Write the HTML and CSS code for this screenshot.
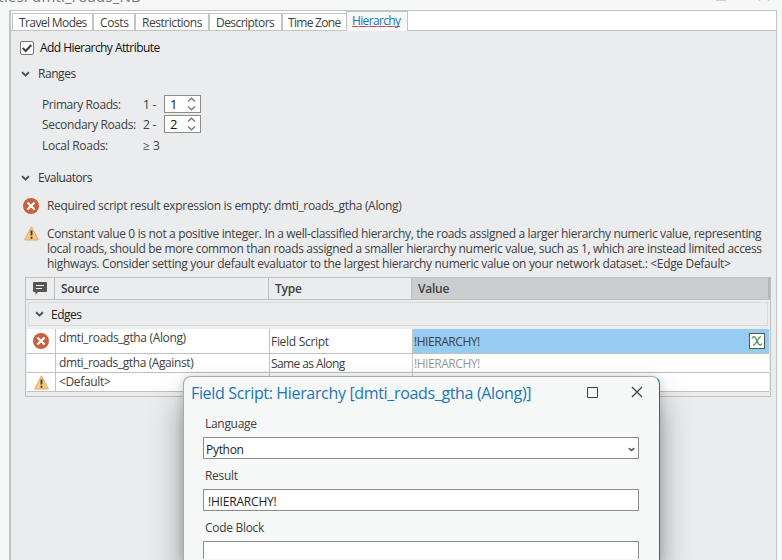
FILE: index.html
```html
<!DOCTYPE html>
<html lang="en">
<head>
<meta charset="utf-8">
<title>Network dataset properties</title>
<link rel="stylesheet" href="styles.css">
</head>
<body>
<svg width="0" height="0" class="defs">
  <symbol id="chevron" viewBox="0 0 9 6"><path d="M1 1.2 4.5 4.4 8 1.2" fill="none" stroke="#505050" stroke-width="1.9"/></symbol>
  <symbol id="error" viewBox="0 0 16 16"><circle cx="8" cy="8" r="8" fill="#c8613f"/><path d="M4.4 4.4l7.2 7.2M11.6 4.4l-7.2 7.2" stroke="#fff" stroke-width="2.1"/></symbol>
  <symbol id="warning" viewBox="0 0 15 15"><path d="M7.5.8 14.4 14H.6Z" fill="#f6c98c" stroke="#eda95b" stroke-width="1" stroke-linejoin="round"/><path d="M7.5 4.5v5M7.5 10.7v2" stroke="#404040" stroke-width="1.9"/></symbol>
</svg>
<header class="titlebar">
  <span class="window-title">rties: dmti_roads_NB</span>
  <span class="window-buttons"><svg width="60" height="10" viewBox="0 0 60 10"><path d="M1 9.5h10M44.500 8v2M53.500 8v2" stroke="#ccd0d0" stroke-width="1.5"/></svg></span>
</header>
<main class="panel">
  <nav class="tabs">
    <span class="tab t-travel">Travel Modes</span>
    <span class="tab t-costs">Costs</span>
    <span class="tab t-restrict">Restrictions</span>
    <span class="tab t-desc">Descriptors</span>
    <span class="tab t-zone">Time Zone</span>
    <span class="tab t-hier active"><span class="link">Hierarchy</span></span>
  </nav>
  <section class="content">
    <label class="check-row">
      <span class="checkbox"><svg width="12" height="12" viewBox="0 0 12 12"><path d="M1.700 6 4.700 9 10.300 3" fill="none" stroke="#404040" stroke-width="2"/></svg></span>
      <span class="check-label">Add Hierarchy Attribute</span>
    </label>
    <h2 class="group ranges-title"><svg width="9" height="6"><use href="#chevron"/></svg><span>Ranges</span></h2>
    <div class="ranges">
      <span class="narrow">Primary Roads:</span><span>1 -</span>
      <span class="spinner">1<svg width="9" height="14" viewBox="0 0 9 14"><path d="M1 4.500 4.500 1.200 8 4.500M1 9.500 4.500 12.800 8 9.500" fill="none" stroke="#777" stroke-width="1.300"/></svg></span>
      <span class="tight">Secondary Roads:</span><span>2 -</span>
      <span class="spinner">2<svg width="9" height="14" viewBox="0 0 9 14"><path d="M1 4.500 4.500 1.200 8 4.500M1 9.500 4.500 12.800 8 9.500" fill="none" stroke="#777" stroke-width="1.300"/></svg></span>
      <span>Local Roads:</span><span class="wide">≥ 3</span>
    </div>
    <h2 class="group eval-title"><svg width="9" height="6"><use href="#chevron"/></svg><span>Evaluators</span></h2>
    <div class="message error-message"><svg width="16" height="16"><use href="#error"/></svg><p class="m0">Required script result expression is empty: dmti_roads_gtha (Along)</p></div>
    <div class="message warning-message"><svg width="15" height="15"><use href="#warning"/></svg><p><span class="m1">Constant value 0 is not a positive integer. In a well-classified hierarchy, the roads assigned a larger hierarchy numeric value, representing</span><br><span class="m2">local roads, should be more common than roads assigned a smaller hierarchy numeric value, such as 1, which are instead limited access</span><br><span class="m3">highways. Consider setting your default evaluator to the largest hierarchy numeric value on your network dataset.: &lt;Edge Default&gt;</span></p></div>
    <div class="table">
      <div class="head">
        <span class="cell icon-cell"><svg width="14" height="13" viewBox="0 0 14 13"><path d="M1 0h12q1 0 1 1v8q0 1-1 1H5L2.500 12.800V10H1Q0 10 0 9V1Q0 0 1 0Z" fill="#555"/><path d="M3 3.500h8M3 6.500h6" stroke="#eee" stroke-width="1.200"/></svg></span>
        <span class="cell">Source</span><span class="cell">Type</span><span class="cell sorted">Value</span>
      </div>
      <div class="edges"><svg width="9" height="6"><use href="#chevron"/></svg><span>Edges</span></div>
      <div class="row r1">
        <span class="cell icon-cell"><svg width="16" height="16"><use href="#error"/></svg></span>
        <span class="cell src">dmti_roads_gtha (Along)</span><span class="cell">Field Script</span>
        <span class="cell selected"><span class="caps">!HIERARCHY!</span><span class="expr"><svg width="12" height="12" viewBox="0 0 12 12"><path d="M1 3.500Q2 1 4 2.200L8 9.500Q9.500 11 11 8.500M9.800 1.500Q8 2 6 6T2 10.300" fill="none" stroke="#5a9a5a" stroke-width="1.400"/></svg></span></span>
      </div>
      <div class="row r2">
        <span class="cell"></span><span class="cell src against">dmti_roads_gtha (Against)</span><span class="cell same">Same as Along</span><span class="cell muted caps">!HIERARCHY!</span>
      </div>
      <div class="row r3">
        <span class="cell icon-cell"><svg width="15" height="15"><use href="#warning"/></svg></span><span class="cell src">&lt;Default&gt;</span><span class="cell"></span><span class="cell"></span>
      </div>
    </div>
  </section>
</main>
<div class="dialog" role="dialog">
  <div class="dialog-head">
    <h1>Field Script: Hierarchy [dmti_roads_gtha (Along)]</h1>
    <svg class="maximize" width="11" height="11" viewBox="0 0 11 11"><path d="M.5.5h10v10H.5Z" fill="none" stroke="#404040"/></svg>
    <svg width="12" height="12" viewBox="0 0 12 12"><path d="M1 1l10 10M11 1 1 11" stroke="#404040" stroke-width="1.200"/></svg>
  </div>
  <div class="form">
    <span class="label">Language</span>
    <div class="field select"><span>Python</span><svg width="7" height="5" viewBox="0 0 9 6"><use href="#chevron"/></svg></div>
    <span class="label">Result</span>
    <div class="field result"><span>!HIERARCHY!</span></div>
    <span class="label">Code Block</span>
    <div class="field code"></div>
  </div>
</div>
</body>
</html>
```
FILE: styles.css
```css
* { box-sizing: border-box; }
body {
  position: relative;
  width: 782px;
  height: 560px;
  margin: 0;
  overflow: hidden;
  background: #f6f8f7;
  color: #404040;
  font: 12px/15px "Open Sans", "Noto Sans", sans-serif;
  letter-spacing: -0.3px;
  white-space: nowrap;
}
svg { display: block; flex: none; }
.defs { position: absolute; }
h1, h2, p { margin: 0; font: inherit; }

.titlebar {
  display: flex;
  justify-content: space-between;
  align-items: flex-start;
  height: 10px;
  overflow: hidden;
}
.window-title { margin: -13px 0 0 -8px; font-size: 15px; line-height: 18px; color: #777; letter-spacing: 0.2px; }
.window-buttons { margin: -9px 0 0; padding-right: 7px; }

.panel {
  width: 768px;
  height: 550px;
  margin-left: 9px;
  border: solid #c2c3c5;
  border-width: 1px 1px 0 2px;
  background: #ebecee;
}
.tabs { display: flex; height: 20px; padding: 2px 0 0 1px; background: #fff; border-bottom: 1px solid #bfc0c5; }
.tab {
  height: 18px;
  border: 1px solid #c2c3c5;
  padding-left: 6px;
  line-height: 17px;
  background: #fff;
}
.t-travel { width: 81px; letter-spacing: -0.6px; }
.t-costs { width: 42px; letter-spacing: -0.4px; }
.t-restrict { width: 74px; letter-spacing: -0.45px; }
.t-desc { width: 73px; letter-spacing: -0.55px; }
.t-zone { width: 64px; padding-left: 5px; border-right: 0; letter-spacing: -0.7px; }
.t-hier { width: 62px; padding-left: 5px; letter-spacing: -0.65px; }
.tab.active { height: 20px; margin-top: -2px; background: #f6f8f7; border-bottom: 0; color: #1b75bc; line-height: 17px; }
.link {
  display: inline-block;
  height: 15px;
  line-height: 17px;
  border-bottom: 1px solid #6f95c6;
  border-image: repeating-linear-gradient(90deg, #e8383d 0 6px, #6f95c6 6px 9px) 1;
}

.content { padding: 9px 0 0 9px; }
.check-row { display: flex; align-items: center; gap: 6px; height: 15px; color: #111; }
.check-label { margin-top: -1px; letter-spacing: -0.56px; }
.checkbox { width: 14px; height: 14px; border: 1px solid #777; border-radius: 2px; background: #fff; }
.group { display: flex; align-items: center; gap: 8px; height: 15px; padding-left: 1px; color: #333; letter-spacing: -0.45px; }
.ranges-title { margin-top: 11px; }
.ranges {
  display: grid;
  grid-template-columns: 101px 21px 37px;
  grid-template-rows: 20px 20px 23px;
  align-items: center;
  margin: 13px 0 0 22px;
}
.narrow { letter-spacing: -0.42px; }
.tight { letter-spacing: -0.33px; }
.wide { letter-spacing: 0; }
.spinner { display: flex; align-items: center; justify-content: space-between; width: 37px; height: 18px; padding: 0 4px 0 5px; border: 1px solid #8c8c8c; background: #fff; color: #111; font-size: 13px; }
.eval-title { margin-top: 13px; }
.message { display: flex; gap: 8px; }
.error-message { margin: 13px 0 0 3px; }
.warning-message { margin: 12px 0 0 4px; }
.m0 { letter-spacing: -0.32px; }
.m1, .m2 { letter-spacing: -0.34px; }
.m3 { letter-spacing: -0.33px; }

.table { width: 746px; height: 120px; margin: 6px 0 0 5px; border: 1px solid #bfc0c2; }
.head { display: grid; grid-template-columns: 29px 214px 143px 1fr; height: 22px; border-bottom: 1px solid #bfc0c2; font-weight: 600; letter-spacing: -0.25px; }
.head .cell { display: flex; align-items: center; padding-left: 6px; border-right: 1px solid #bfc0c2; }
.head .sorted { background: #cbccd0; border-right: 2px solid #b4b5ba; }
.edges { display: flex; align-items: center; gap: 7px; height: 24px; margin: 2px 2px 3px; padding-left: 6px; border: 1px solid #d9dadc; color: #222; letter-spacing: -0.5px; }
.row { display: grid; grid-template-columns: 29px 214px 143px 1fr; margin: 0 1px; background: #fff; border-bottom: 1px solid #bfc0c2; }
.row .cell { display: flex; align-items: center; padding-left: 1px; border-right: 1px solid #c5c5c5; }
.row .cell:last-child { border-right: 0; }
.row .src { align-items: flex-start; padding: 1px 0 0 3px; letter-spacing: -0.35px; }
.row .against { letter-spacing: -0.4px; }
.row .same { letter-spacing: -0.6px; }
.caps { letter-spacing: -0.45px; }
.r1 { height: 25px; }
.r2 { height: 19px; }
.r3 { height: 19px; }
.head .icon-cell, .row .icon-cell { justify-content: center; padding: 0; }
.row .selected { justify-content: space-between; padding-right: 4px; background: #96ccef; }
.expr { width: 16px; height: 16px; padding: 1px; border: 1px solid #555; background: #fff; }
.row .muted { color: #999; }

.dialog {
  position: absolute;
  left: 183px;
  top: 376px;
  width: 477px;
  height: 184px;
  border-top: 1px solid #aaa;
  border-left: 1px solid #aaa;
  border-right: 1px solid #1b6cab;
  border-radius: 8px 8px 0 0;
  background: #f6f8f7;
  box-shadow: 0 22px 32px rgba(0, 0, 0, .38), 0 0 8px rgba(0, 0, 0, .15);
}
.dialog-head { display: flex; align-items: center; height: 32px; padding: 0 16px 0 7px; color: #1b75bc; }
.dialog-head h1 { flex: 1; font-size: 16px; line-height: 22px; letter-spacing: -0.34px; }
.dialog-head svg { margin-top: -2px; }
.dialog-head .maximize { margin-right: 33px; }
.form { padding: 7px 20px 0 19px; }
.label { display: block; height: 15px; margin-left: 2px; }
.field { display: flex; align-items: center; justify-content: space-between; height: 22px; margin: 6px 0 9px; padding: 2px 3px 0 2px; border: 1px solid #8c8c8c; background: #fff; color: #222; }
.result { padding-left: 4px; letter-spacing: -0.2px; }
.code { height: 18px; margin-bottom: 0; border-bottom: 0; }
```
